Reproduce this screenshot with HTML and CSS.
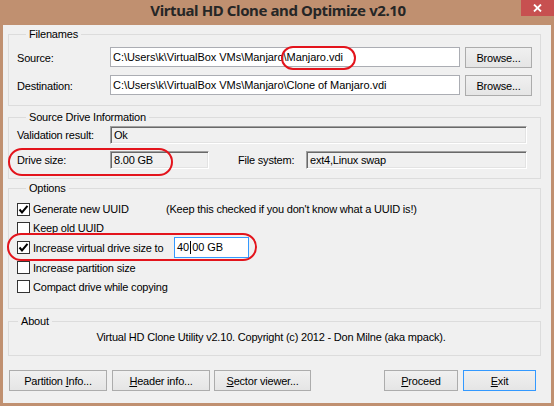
FILE: index.html
```html
<!DOCTYPE html>
<html>
<head>
<meta charset="utf-8">
<link rel="stylesheet" href="styles.css">
</head>
<body>
<div class="window">
  <div class="titlebar">
    <div class="title">Virtual HD Clone and Optimize v2.10</div>
    <div class="close">
      <svg width="9" height="8" viewBox="0 0 9 8"><path d="M1 0.5 L8 7.5 M8 0.5 L1 7.5" stroke="#fff" stroke-width="1.8" fill="none"/></svg>
    </div>
  </div>
  <div class="client">
    <section class="group g-files">
      <div class="legend">Filenames</div>
      <div class="row row-file first">
        <span class="label">Source:</span>
        <div class="edit">C:\Users\k\VirtualBox VMs\Manjaro\Manjaro.vdi</div>
        <div class="btn browse"><span>Browse...</span></div>
      </div>
      <div class="row row-file second">
        <span class="label">Destination:</span>
        <div class="edit">C:\Users\k\VirtualBox VMs\Manjaro\Clone of Manjaro.vdi</div>
        <div class="btn browse"><span>Browse...</span></div>
      </div>
    </section>

    <section class="group g-src">
      <div class="legend">Source Drive Information</div>
      <div class="row row-info first">
        <span class="label">Validation result:</span>
        <div class="sunken w-valid">Ok</div>
      </div>
      <div class="row row-info second">
        <span class="label">Drive size:</span>
        <div class="sunken w-size">8.00 GB</div>
        <span class="label label-fs">File system:</span>
        <div class="sunken w-fs">ext4,Linux swap</div>
      </div>
    </section>

    <section class="group g-opt">
      <div class="legend">Options</div>
      <div class="row opt opt1">
        <span class="cb"><svg width="11" height="11" viewBox="0 0 11 11"><polyline points="1.5,5.5 4,8.5 9.5,1.8" fill="none" stroke="#000" stroke-width="2"/></svg></span>
        <span class="opt-text t-gen">Generate new UUID</span>
        <span class="note">(Keep this checked if you don't know what a UUID is!)</span>
      </div>
      <div class="row opt opt2">
        <span class="cb"></span>
        <span class="opt-text">Keep old UUID</span>
      </div>
      <div class="row opt opt3">
        <span class="cb"><svg width="11" height="11" viewBox="0 0 11 11"><polyline points="1.5,5.5 4,8.5 9.5,1.8" fill="none" stroke="#000" stroke-width="2"/></svg></span>
        <span class="opt-text t-inc">Increase virtual drive size to</span>
        <div class="edit focus">40<span class="caret"></span>00 GB</div>
      </div>
      <div class="row opt opt4">
        <span class="cb"></span>
        <span class="opt-text">Increase partition size</span>
      </div>
      <div class="row opt opt5">
        <span class="cb"></span>
        <span class="opt-text">Compact drive while copying</span>
      </div>
    </section>

    <section class="group g-about">
      <div class="legend">About</div>
      <div class="about-text">Virtual HD Clone Utility v2.10. Copyright (c) 2012 - Don Milne (aka mpack).</div>
    </section>

    <div class="buttons">
      <div class="btn b-part"><span>Partition <u>I</u>nfo...</span></div>
      <div class="btn b-head"><span><u>H</u>eader info...</span></div>
      <div class="btn b-sect"><span><u>S</u>ector viewer...</span></div>
      <div class="btn b-proc"><span><u>P</u>roceed</span></div>
      <div class="btn b-exit"><span><u>E</u>xit</span></div>
    </div>
  </div>

  <div class="mark mark-src"></div>
  <div class="mark mark-drive"></div>
  <div class="mark mark-inc"></div>
</div>
</body>
</html>
```

FILE: styles.css
```css
html, body {
  margin: 0;
  padding: 0;
}

body {
  font-family: "Liberation Sans", Arial, sans-serif;
  font-size: 11px;
  letter-spacing: -0.2px;
  color: #000;
}

.window {
  position: relative;
  width: 554px;
  height: 406px;
  box-sizing: border-box;
  background: #c09070;
  padding: 0 3px 3px 3px;
  display: flex;
  flex-direction: column;
  overflow: hidden;
}

.titlebar {
  height: 25px;
  margin: 0 -3px;
  display: grid;
  grid-template-columns: 1fr auto 1fr;
}

.title {
  grid-column: 2;
  font-family: "Noto Sans", "Open Sans", sans-serif;
  font-weight: 700;
  font-size: 15px;
  letter-spacing: -0.4px;
  line-height: 20px;
  color: #262626;
  white-space: nowrap;
  padding-left: 2px;
}

.close {
  grid-column: 3;
  justify-self: end;
  width: 33px;
  height: 16px;
  background: #c75050;
  display: flex;
  align-items: center;
  justify-content: center;
}

.client {
  flex: 1;
  background: #f0f0f0;
  padding: 9px 0 0 5px;
  display: flex;
  flex-direction: column;
}

.group {
  width: 533px;
  box-sizing: border-box;
  border: 1px solid #dcdcdc;
}

.legend {
  margin: -7px 0 0 9px;
  padding: 0 3px;
  width: max-content;
  height: 13px;
  line-height: 13px;
  background: #f0f0f0;
}

.row {
  display: flex;
  align-items: center;
}

.label {
  width: 93px;
  flex: none;
  white-space: nowrap;
}

/* Filenames */
.g-files {
  padding: 0 8px 9px 8px;
}

.row-file {
  height: 21px;
}

.row-file.first { margin-top: 6px; }
.row-file.second { margin-top: 7px; }

.edit {
  box-sizing: border-box;
  width: 350px;
  height: 20px;
  border: 1px solid #abadb3;
  background: #fff;
  padding-left: 2px;
  line-height: 18px;
  letter-spacing: -0.05px;
  white-space: nowrap;
  overflow: hidden;
}

.row-file .edit {
  align-self: flex-start;
}

.btn {
  box-sizing: border-box;
  height: 21px;
  border: 1px solid #acacac;
  background: linear-gradient(#f0f0f0, #e5e5e5);
  display: flex;
  align-items: center;
  justify-content: center;
  white-space: nowrap;
}

.btn u {
  text-decoration-thickness: 1px;
  text-underline-offset: 1px;
}

.browse {
  margin-left: 5px;
  width: 67px;
}

/* Source drive info */
.g-src {
  margin-top: 11px;
  padding: 0 12px 9px 8px;
}

.row-info {
  height: 18px;
}

.row-info.first { margin-top: 2px; }
.row-info.second { margin-top: 7px; }

.sunken {
  box-sizing: border-box;
  height: 18px;
  border-top: 1px solid #a0a0a0;
  border-left: 1px solid #a0a0a0;
  border-bottom: 1px solid #ffffff;
  border-right: 1px solid #ffffff;
  box-shadow: inset 1px 1px 0 #696969, inset -1px -1px 0 #e3e3e3;
  padding-left: 3px;
  line-height: 16px;
  white-space: nowrap;
}

.w-valid { width: 417px; }
.w-size { width: 99px; }
.w-fs { width: 221px; }

.label-fs {
  width: 68px;
  margin-left: 29px;
}

/* Options */
.g-opt {
  margin-top: 9px;
  padding: 0 8px 12px 8px;
}

.opt1 { margin-top: 4px; height: 20px; }
.opt2 { height: 18px; }
.opt3 { height: 21px; }
.opt4 { height: 19px; }
.opt5 { height: 19px; }

.cb {
  box-sizing: border-box;
  width: 13px;
  height: 13px;
  flex: none;
  border: 1px solid #333;
  background: #fff;
  margin-right: 3px;
  display: flex;
  align-items: center;
  justify-content: center;
}

.opt-text {
  white-space: nowrap;
}

.t-gen { width: 133px; }
.t-inc { width: 141px; }

.note {
  white-space: nowrap;
}

.edit.focus {
  width: 75px;
  height: 21px;
  border-color: #3399ff;
  line-height: 19px;
}

.caret {
  display: inline-block;
  width: 1px;
  height: 13px;
  background: #000;
  vertical-align: -3px;
  margin: 0 1px;
}

/* About */
.g-about {
  margin-top: 12px;
  padding: 0 0 11px 0;
}

.about-text {
  margin-top: 3px;
  line-height: 13px;
  text-align: center;
  padding-right: 7px;
}

/* Bottom buttons */
.buttons {
  margin: 14px 0 0 1px;
  width: 527px;
  display: flex;
}

.b-part { width: 98px; }
.b-head { width: 98px; margin-left: 5px; }
.b-sect { width: 97px; margin-left: 4px; }
.b-proc { width: 74px; margin-left: auto; }
.b-exit { width: 73px; margin-left: 5px; border-color: #3399ff; }

/* Red annotation marks drawn over the screenshot */
.mark {
  position: absolute;
  box-sizing: border-box;
  border: 2px solid #e3141c;
}

.mark-src {
  left: 281px;
  top: 46px;
  width: 75px;
  height: 24px;
  border-radius: 12px;
}

.mark-drive {
  left: 8px;
  top: 148px;
  width: 165px;
  height: 28px;
  border-radius: 14px;
}

.mark-inc {
  left: 7px;
  top: 233px;
  width: 250px;
  height: 28px;
  border-radius: 14px;
}
```
